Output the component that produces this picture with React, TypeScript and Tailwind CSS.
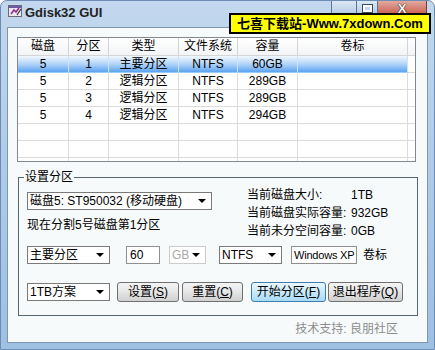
import React from "react";

const font = "font-['Liberation_Sans','Noto_Sans_CJK_SC',sans-serif]";

const rows = [
  ["5", "1", "主要分区", "NTFS", "60GB", ""],
  ["5", "2", "逻辑分区", "NTFS", "289GB", ""],
  ["5", "3", "逻辑分区", "NTFS", "289GB", ""],
  ["5", "4", "逻辑分区", "NTFS", "294GB", ""],
  ["", "", "", "", "", ""],
  ["", "", "", "", "", ""],
  ["", "", "", "", "", ""],
];

const heads = ["磁盘", "分区", "类型", "文件系统", "容量", "卷标"];
const widths = ["w-[51px]", "w-[40px]", "w-[70px]", "w-[59px]", "w-[60px]", "w-[110px]"];

const Arrow = () => (
  <svg width="8" height="4" viewBox="0 0 8 4" className="shrink-0">
    <path d="M0 0h8L4 4z" fill="#000" />
  </svg>
);

const Combo = ({ children, className, disabled }: { children: React.ReactNode; className: string; disabled?: boolean }) => (
  <div
    className={`flex items-center h-[18px] bg-white border pl-[2px] pr-[5px] ${
      disabled ? "border-[#cbcbcb] text-[#a9a9a9]" : "border-[#7a7a7a] text-black"
    } ${className}`}
  >
    <span className="flex-1 whitespace-nowrap overflow-hidden leading-[16px]">{children}</span>
    <Arrow />
  </div>
);

const Btn = ({ children, className, focus }: { children: React.ReactNode; className: string; focus?: boolean }) => (
  <div
    className={`h-[20px] rounded-[3px] border flex items-center justify-center leading-none ${
      focus
        ? "border-[#3c7fb1] bg-gradient-to-b from-[#eaf6fd] via-[#c9eafc] to-[#a7d9f5]"
        : "border-[#707070] bg-gradient-to-b from-[#f4f4f4] via-[#e6e6e6] to-[#d0d0d0]"
    } ${className}`}
  >
    {children}
  </div>
);

export default function App() {
  return (
    <div className={`${font} text-[12px] text-black w-[435px] h-[350px] relative overflow-hidden rounded-t-[7px] border border-[#6c8db3] bg-gradient-to-b from-[#c3d8ee] via-[#aecae7] to-[#9ec0e3] flex flex-col`}>
      {/* title bar */}
      <div className="h-[26px] flex items-start pl-[7px] shrink-0">
        <svg width="14" height="14" viewBox="0 0 14 14" className="mt-[3px]">
          <rect x="0.5" y="1.5" width="13" height="11" fill="#e8e8ee" stroke="#6a6a78" />
          <rect x="1" y="2" width="12" height="2" fill="#6b5aa8" />
          <path d="M3 10l3-4 2 2 3-4" stroke="#9b2d8f" strokeWidth="1.6" fill="none" />
          <path d="M9 11l4-6" stroke="#333" strokeWidth="1.2" />
        </svg>
        <span className="ml-[3px] mt-[4px] font-bold text-[13px] leading-[15px] text-[#222] font-['Liberation_Sans',sans-serif]">Gdisk32 GUI</span>
        <div className="ml-auto mr-[7px] flex items-start -mt-px">
          <div className="w-[26px] h-[19px] rounded-bl-[4px] border border-[#5b7596] bg-gradient-to-b from-[#dce8f4] to-[#aac4e2]" />
          <div className="w-[21px] h-[19px] border border-l-0 border-[#5b7596] bg-gradient-to-b from-[#dce8f4] to-[#aac4e2] flex justify-center pt-[4px]">
            <div className="w-[9px] h-[7px] border-2 border-white outline outline-1 outline-[#3b4a5e]" />
          </div>
          <div className="w-[49px] h-[19px] rounded-br-[4px] border border-l-0 border-[#7a3a33] bg-gradient-to-b from-[#e2aaa0] via-[#d27a6c] to-[#c2463a] flex justify-center">
            <span className="text-white font-bold text-[13px] leading-[15px] [text-shadow:0_0_1px_#000,0_0_1px_#000]">X</span>
          </div>
        </div>
      </div>

      {/* client area */}
      <div className="mx-[6px] mb-[6px] flex-1 border border-[#7d95af] bg-[#f7fafb] flex flex-col">
        {/* list view */}
        <div className="ml-[9px] mt-[9px] w-[399px] h-[125px] border border-[#828790] bg-white overflow-hidden">
          <div className="flex h-[18px] border-b border-[#d5d5d5] bg-gradient-to-b from-white to-[#f3f4f6]">
            {heads.map((h, i) => (
              <div key={h} className={`${widths[i]} shrink-0 border-r border-[#d5d5d5] text-center leading-[17px]`}>
                {h}
              </div>
            ))}
            <div className="flex-1" />
          </div>
          {rows.map((r, ri) => (
            <div key={ri} className="flex h-[17px]">
              {r.map((c, ci) => (
                <div
                  key={ci}
                  className={`${widths[ci]} shrink-0 border-r border-b text-center leading-[16px] ${
                    ri === 0
                      ? "border-r-[#cfe2f7] border-b-[#9ccaf6] bg-gradient-to-b from-[#f2f8ff] via-[#b2d4f8] to-[#5ba3f1]"
                      : "border-[#dcdcdc]"
                  }`}
                >
                  {c}
                </div>
              ))}
              <div className="flex-1 border-b border-[#dcdcdc]" />
            </div>
          ))}
        </div>

        {/* group box */}
        <div className="ml-[10px] mt-[15px] w-[400px] h-[139px] border border-[#56676f] flex flex-col">
          <div className="-mt-[9px] ml-[5px] px-px w-fit h-[17px] leading-[17px] bg-[#f7fafb]">设置分区</div>

          <div className="flex pl-[8px]">
            <div className="w-[185px] flex flex-col">
              <Combo className="mt-[6px] w-[185px]">磁盘5: ST950032 (移动硬盘)</Combo>
              <div className="mt-[7px] leading-[17px]">现在分割5号磁盘第1分区</div>
            </div>
            <div className="ml-[35px] grid grid-cols-[104px_auto] leading-[18px]">
              <span>当前磁盘大小:</span>
              <span>1TB</span>
              <span>当前磁盘实际容量:</span>
              <span>932GB</span>
              <span>当前未分空间容量:</span>
              <span>0GB</span>
            </div>
          </div>

          <div className="flex items-center pl-[8px] mt-[6px] h-[18px]">
            <Combo className="w-[83px]">主要分区</Combo>
            <div className="ml-[16px] w-[34px] h-[18px] bg-white border border-[#8e8f8f] pl-[3px] leading-[16px]">60</div>
            <Combo disabled className="ml-[9px] w-[37px]">GB</Combo>
            <Combo className="ml-[13px] w-[63px]">NTFS</Combo>
            <div className="ml-[9px] w-[66px] h-[18px] bg-white border border-[#8e8f8f] pl-[2px] text-[11px] tracking-[-0.2px] leading-[16px] whitespace-nowrap overflow-hidden">Windows XP</div>
            <span className="ml-[6px]">卷标</span>
          </div>

          <div className="flex items-center pl-[8px] mt-[18px] h-[20px]">
            <Combo className="w-[83px]">1TB方案</Combo>
            <Btn className="ml-[7px] w-[62px]">设置(<span className="underline">S</span>)</Btn>
            <Btn className="ml-[3px] w-[61px]">重置(<span className="underline">C</span>)</Btn>
            <Btn focus className="ml-[8px] w-[75px]">开始分区(<span className="underline">F</span>)</Btn>
            <Btn className="ml-[2px] w-[75px]">退出程序(<span className="underline">Q</span>)</Btn>
          </div>
        </div>

        <div className="mt-[5px] pr-[29px] text-right leading-[16px] text-[#8c8c8c]">技术支持: 良朋社区</div>
      </div>

      {/* watermark */}
      <div className="absolute left-[228px] top-[12px] w-[202px] h-[21px] border-2 border-black bg-[#ffff00] flex items-center justify-center font-bold text-[13px] leading-none whitespace-nowrap">
        七喜下载站-Www.7xdown.Com
      </div>
    </div>
  );
}
